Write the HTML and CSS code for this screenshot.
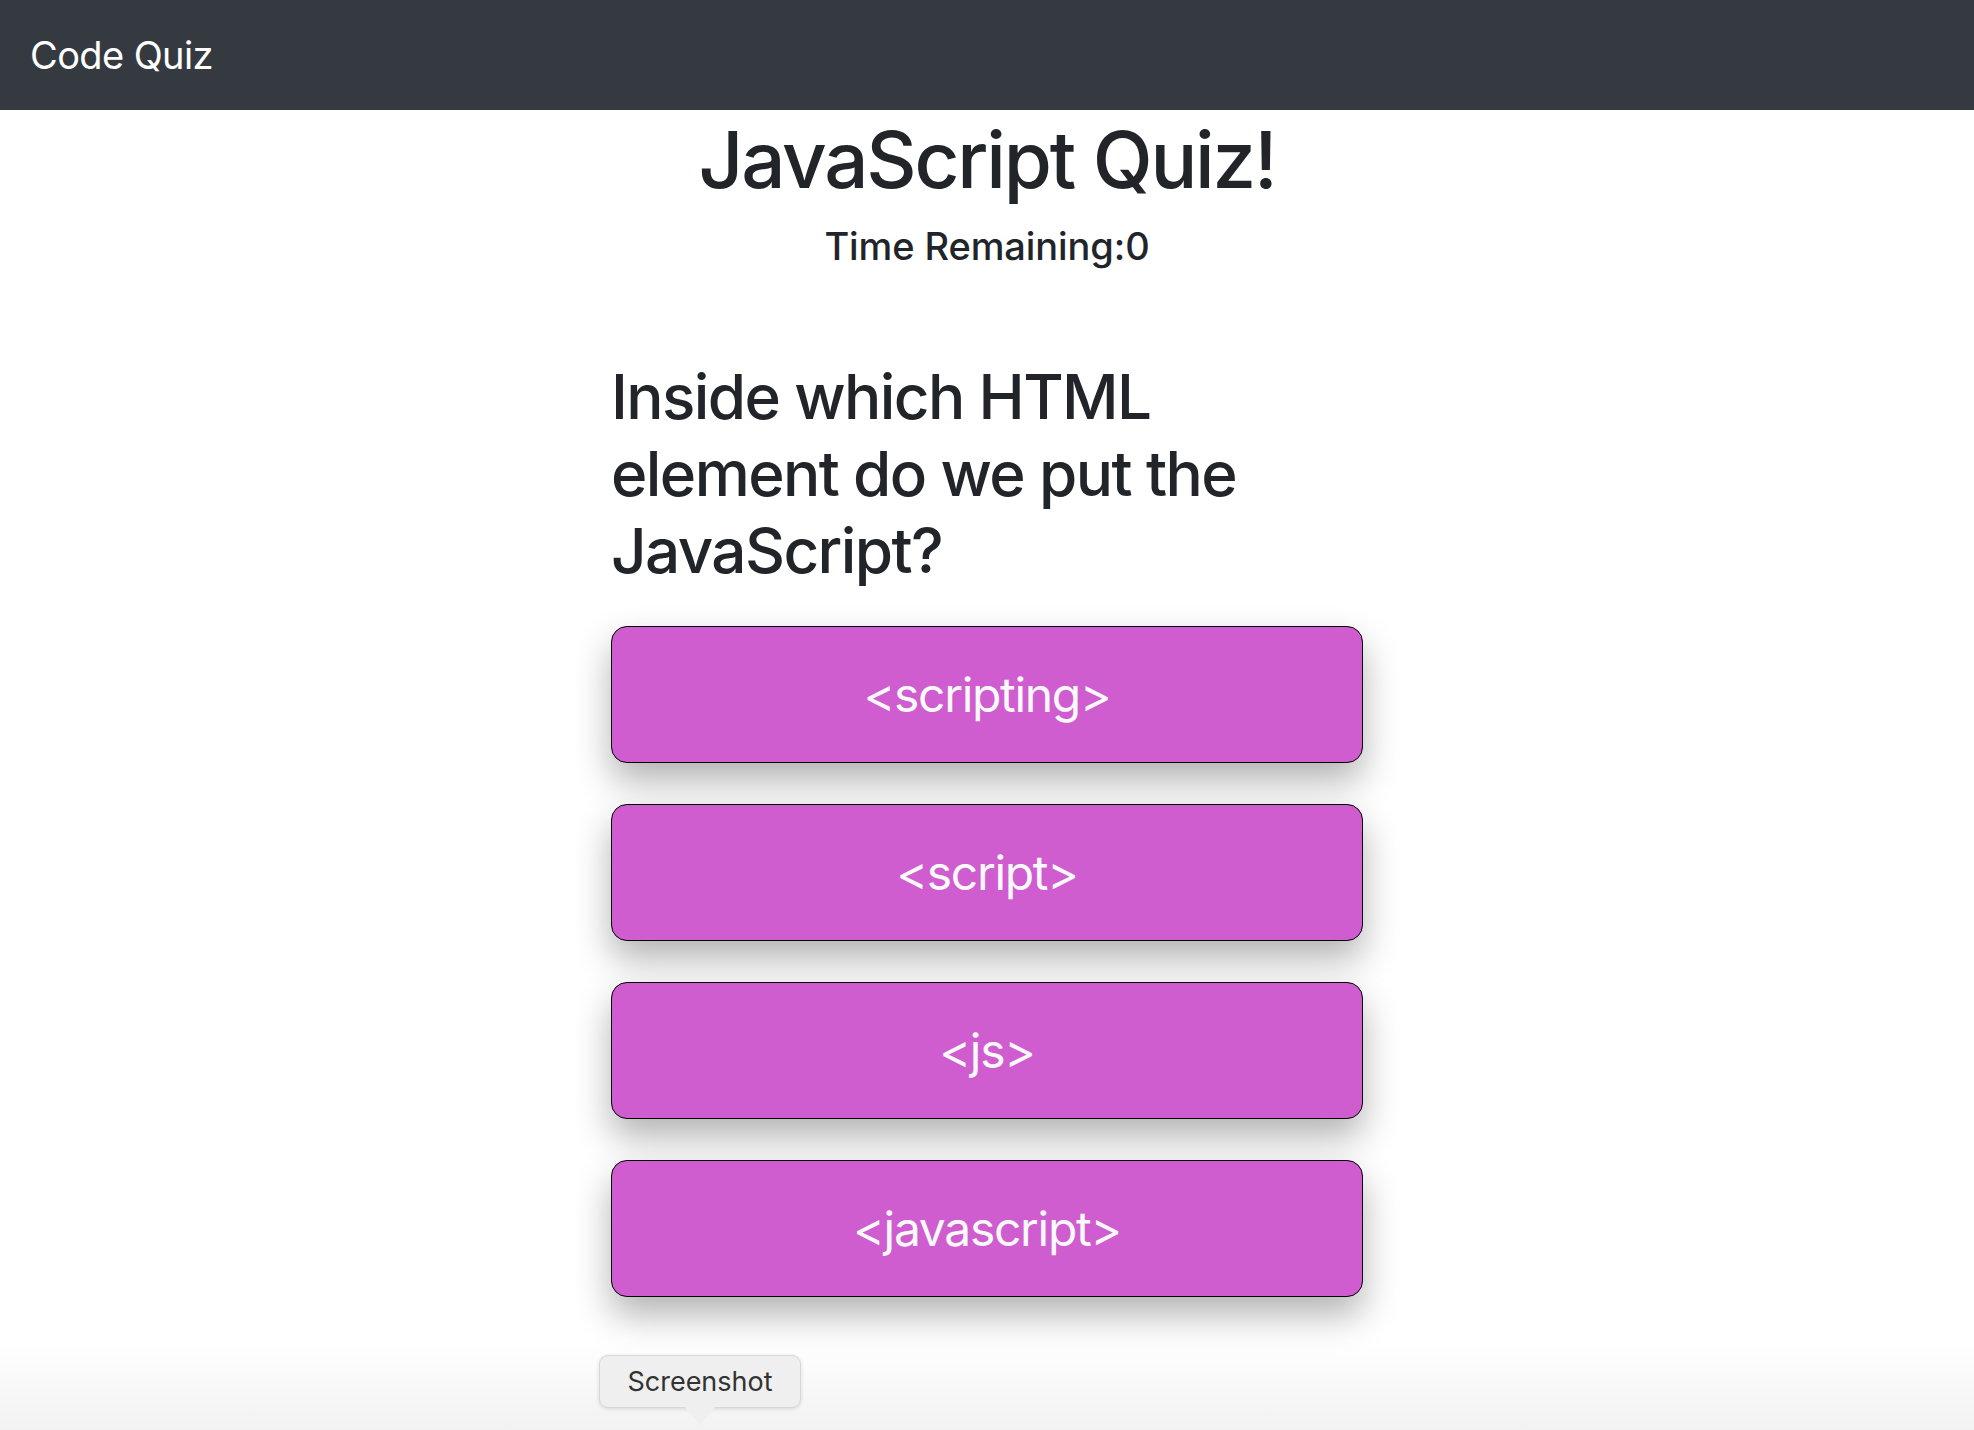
FILE: index.html
```html
<!DOCTYPE html>
<html lang="en">
<head>
<meta charset="utf-8">
<title>Code Quiz</title>
<link rel="stylesheet" href="styles.css">
</head>
<body>
<nav class="navbar">
  <span class="brand">Code Quiz</span>
</nav>
<main class="quiz">
  <header class="quiz-head">
    <h1 class="title">JavaScript Quiz!</h1>
    <h5 class="timer">Time Remaining:0</h5>
  </header>
  <section class="question-box">
    <h2 class="question">Inside which HTML element do we put the JavaScript?</h2>
    <div class="answers">
      <button class="answer">&lt;scripting&gt;</button>
      <button class="answer">&lt;script&gt;</button>
      <button class="answer">&lt;js&gt;</button>
      <button class="answer">&lt;javascript&gt;</button>
    </div>
  </section>
</main>
<div class="shot-tip">Screenshot</div>
</body>
</html>
```
FILE: styles.css
```css
html {
  height: 100%;
}
body {
  margin: 0;
  min-height: 100%;
  font-family: Inter, "Liberation Sans", Arial, sans-serif;
  color: #212529;
  background: linear-gradient(to bottom, #ffffff 0, #ffffff calc(100% - 90px), #f2f2f2 100%);
  position: relative;
}
.navbar {
  height: 110px;
  background: #343a40;
  display: flex;
  align-items: center;
  padding: 0 30px;
}
.brand {
  color: #ffffff;
  font-size: 38px;
  letter-spacing: -0.6px;
  font-weight: 400;
}
.quiz {
  display: flex;
  flex-direction: column;
  align-items: center;
}
.quiz-head {
  display: flex;
  flex-direction: column;
  align-items: center;
  padding-top: 3px;
}
.title {
  margin: 0 0 17px;
  font-size: 78px;
  line-height: 1.2;
  font-weight: 500;
  letter-spacing: -2.2px;
}
.timer {
  margin: 0;
  font-size: 38px;
  line-height: 1.2;
  font-weight: 500;
  letter-spacing: -0.1px;
}
.question-box {
  width: 752px;
  margin-top: 89px;
}
.question {
  margin: 0 0 37px;
  font-size: 62px;
  line-height: 77px;
  font-weight: 500;
  letter-spacing: -1.6px;
}
.answers {
  display: flex;
  flex-direction: column;
  gap: 41px;
}
.answer {
  height: 137px;
  width: 100%;
  background: #d05dcf;
  border: 1.5px solid #000;
  border-radius: 16px;
  color: #f8f9fa;
  font-family: Inter, "Liberation Sans", Arial, sans-serif;
  font-size: 48px;
  letter-spacing: -1.3px;
  box-shadow: 0 18px 36px rgba(0, 0, 0, 0.3);
  cursor: pointer;
}
.shot-tip {
  position: absolute;
  left: 599px;
  top: 1355px;
  width: 202px;
  height: 53px;
  box-sizing: border-box;
  background: #efefef;
  border: 1px solid #d8d8d8;
  border-radius: 9px;
  box-shadow: 0 1px 4px rgba(0, 0, 0, 0.12);
  color: #333;
  font-size: 27px;
  display: flex;
  align-items: center;
  justify-content: center;
}
.shot-tip::after {
  content: "";
  position: absolute;
  left: 50%;
  bottom: -18px;
  margin-left: -15px;
  border-left: 15px solid transparent;
  border-right: 15px solid transparent;
  border-top: 18px solid #efefef;
}
```
